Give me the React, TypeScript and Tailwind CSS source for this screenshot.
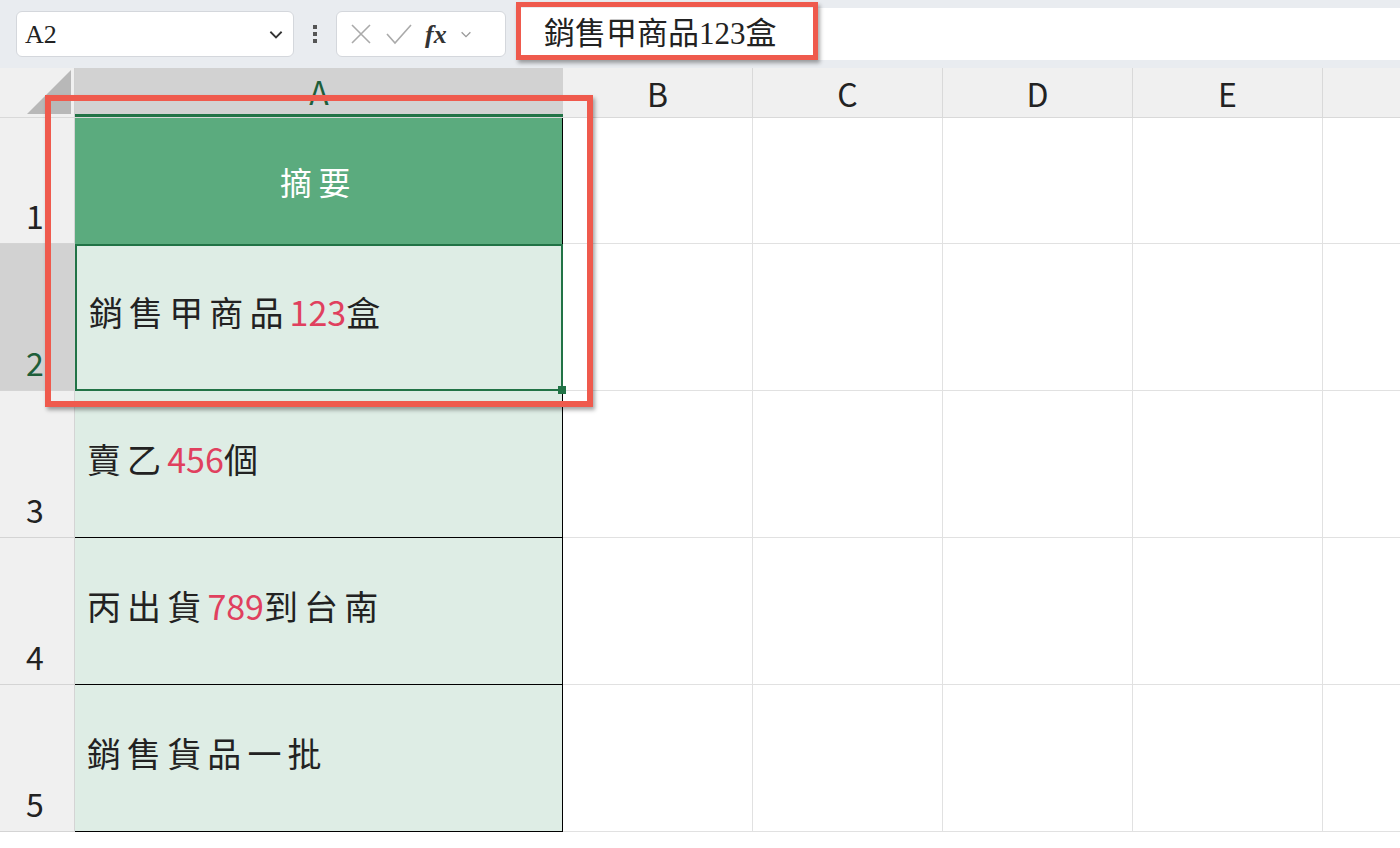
const cols = ["B", "C", "D", "E", ""];
const rows = [
  { n: "1", h: "h-[126px]" },
  { n: "2", h: "h-[147px]" },
  { n: "3", h: "h-[147px]" },
  { n: "4", h: "h-[147px]" },
  { n: "5", h: "h-[147px]" },
];

const Red = ({ children }: { children: React.ReactNode }) => <span className="text-[#e0405e] tracking-normal">{children}</span>;

const cellText: React.ReactNode[] = [
  null,
  <>銷售甲商品<Red>123</Red>盒</>,
  <>賣乙<Red>456</Red>個</>,
  <>丙出貨<Red>789</Red>到台南</>,
  <>銷售貨品一批</>,
];

export default function App() {
  return (
    <div className="relative w-[1400px] h-[848px] overflow-hidden bg-white" style={{ fontFamily: '"Noto Sans CJK TC", "Noto Sans", sans-serif' }}>
      {/* formula bar */}
      <div className="h-[68px] bg-[#e9ecf0] flex items-center pl-4">
        <div className="w-[278px] shrink-0 h-[46px] bg-white rounded-md border border-[#d4d7dc] flex items-center justify-between px-2">
          <span className="text-[26px] text-[#222]" style={{ fontFamily: '"Liberation Serif", serif' }}>A2</span>
          <svg width="18" height="18" viewBox="0 0 16 16" fill="none" stroke="#333" strokeWidth="1.6"><path d="M3 6l5 5 5-5" /></svg>
        </div>
        <div className="w-[42px] shrink-0 flex flex-col items-center gap-[3px]">
          <span className="w-[4px] h-[4px] bg-[#555]" /><span className="w-[4px] h-[4px] bg-[#555]" /><span className="w-[4px] h-[4px] bg-[#555]" />
        </div>
        <div className="w-[170px] shrink-0 h-[46px] bg-white rounded-md border border-[#d4d7dc] flex items-center gap-3 px-3">
          <svg width="24" height="24" viewBox="0 0 24 24" stroke="#aaa" strokeWidth="1.6"><path d="M3 3l18 18M21 3L3 21" /></svg>
          <svg width="28" height="24" viewBox="0 0 28 24" fill="none" stroke="#aaa" strokeWidth="1.6"><path d="M2 12l8 9L26 3" /></svg>
          <span className="italic font-bold text-[26px] text-[#333]" style={{ fontFamily: '"Liberation Serif", serif' }}>fx</span>
          <svg width="14" height="14" viewBox="0 0 16 16" fill="none" stroke="#999" strokeWidth="1.5"><path d="M3 6l5 5 5-5" /></svg>
        </div>
        <div className="flex-1 ml-[11px] h-[52px] bg-white flex items-center pl-[27px]">
          <span className="text-[31px] text-[#222]" style={{ fontFamily: '"Liberation Serif", "Noto Sans CJK TC", serif' }}>銷售甲商品123盒</span>
        </div>
      </div>
      {/* sheet */}
      <div className="flex h-[50px] bg-[#f0f0f0] border-b border-[#d9d9d9]">
        <div className="w-[75px] shrink-0 relative border-r border-[#d0d0d0]">
          <div className="absolute right-[3px] bottom-[3px] w-0 h-0 border-l-[44px] border-l-transparent border-b-[44px] border-b-[#b8b8b8]" />
        </div>
        <div className="w-[488px] shrink-0 bg-[#d2d2d2] border-b-[3px] border-[#217346] flex items-center justify-center text-[32px] text-[#1e5e3a]">A</div>
        {cols.map((c, i) => (
          <div key={i} className="w-[190px] shrink-0 border-r border-[#d9d9d9] flex items-center justify-center text-[32px] text-[#222]">{c}</div>
        ))}
      </div>
      {rows.map((r, i) => (
        <div key={i} className={`flex ${r.h}`}>
          <div className={`w-[75px] shrink-0 border-b border-r border-[#d4d4d4] flex items-end pl-[26px] pb-1 text-[32px] ${i === 1 ? "bg-[#d2d2d2] text-[#1e5e3a]" : "bg-[#f0f0f0] text-[#222]"}`}>{r.n}</div>
          {i === 0 ? (
            <div className="w-[488px] shrink-0 bg-[#5bab7e] border-r border-black flex items-center justify-center text-white text-[32px] tracking-[0.2em]">摘要</div>
          ) : (
            <div className={`w-[488px] shrink-0 bg-[#deede5] flex items-center pl-[12px] text-[34px] text-[#222] tracking-[0.18em] ${i === 1 ? "border-2 border-[#217346] relative" : "border-r border-b border-black"}`}>
              <span className="-mt-3">{cellText[i]}</span>
              {i === 1 && <div className="absolute right-[-5px] bottom-[-5px] w-[8px] h-[8px] bg-[#217346]" />}
            </div>
          )}
          {cols.map((_, j) => (
            <div key={j} className="w-[190px] shrink-0 border-r border-b border-[#e1e1e1]" />
          ))}
        </div>
      ))}
      {/* highlight boxes */}
      <div className="absolute left-[516px] top-[2px] w-[302px] h-[58px] border-[5px] border-[#ef5a4d] shadow-[2px_3px_4px_rgba(0,0,0,0.35)]" />
      <div className="absolute left-[45px] top-[95px] w-[548px] h-[312px] border-[6px] border-[#ef5a4d] shadow-[2px_3px_4px_rgba(0,0,0,0.35)]" />
    </div>
  );
}
